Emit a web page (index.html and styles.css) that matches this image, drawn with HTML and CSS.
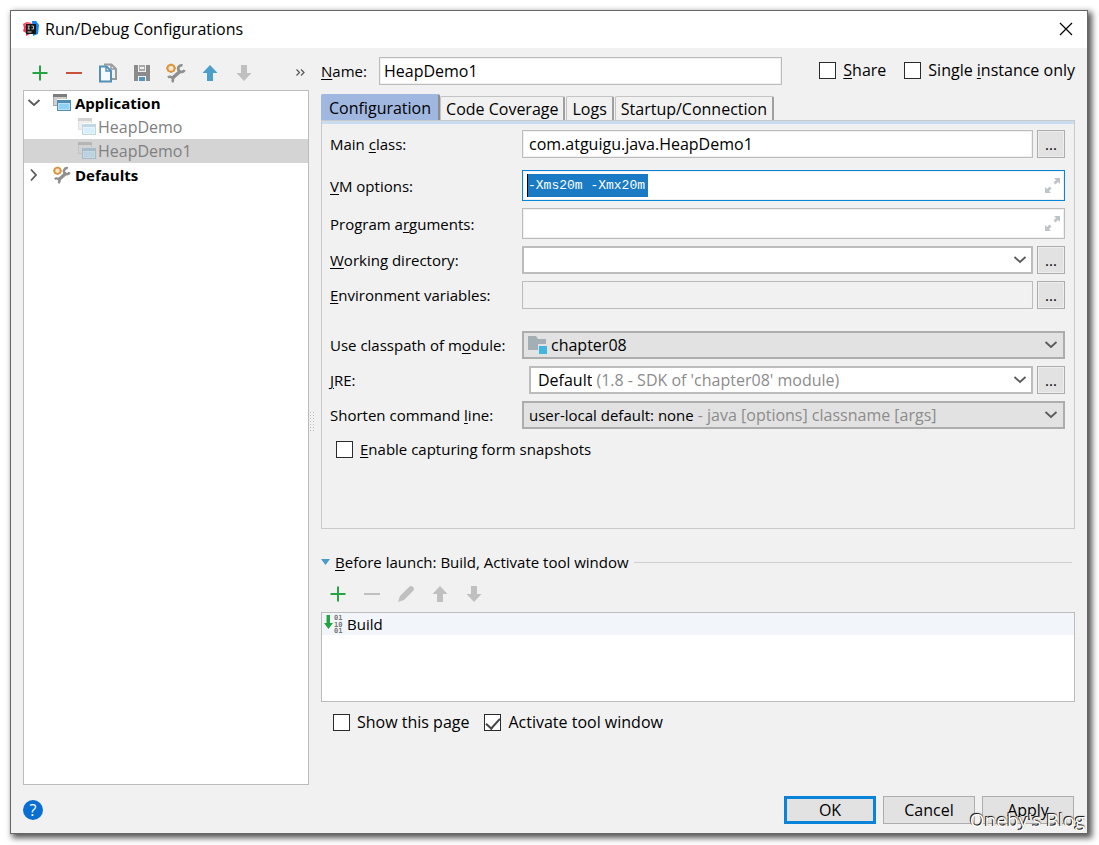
FILE: index.html
```html
<!DOCTYPE html>
<html lang="en">
<head>
<meta charset="utf-8">
<title>Run/Debug Configurations</title>
<link rel="stylesheet" href="styles.css">
</head>
<body>
<svg class="defs" aria-hidden="true">
  <symbol id="chevron" viewBox="0 0 14 8"><path d="M1.5 1 7 6 12.500 1" fill="none" stroke="#5a5a5a" stroke-width="1.800"/></symbol>
  <symbol id="expand" viewBox="0 0 15 15"><path d="M9 0h6v6l-2-2-2.500 2.500-2-2L11 2zM0 9l2 2 2.500-2.500 2 2L4 13l2 2H0z" fill="#bfc4c8"/></symbol>
  <symbol id="plus" viewBox="0 0 16 16"><path d="M8 .5v15M.5 8h15" stroke="#27a343" stroke-width="2"/></symbol>
  <symbol id="minus" viewBox="0 0 16 16"><path d="M0 8h16" stroke="currentColor" stroke-width="2"/></symbol>
  <symbol id="up" viewBox="0 0 16 16"><path d="M8 0 15.500 8H11v8H5V8H.5z" fill="currentColor"/></symbol>
  <symbol id="down" viewBox="0 0 16 16"><path d="M8 16 .5 8H5V0h6v8h4.500z" fill="currentColor"/></symbol>
  <symbol id="app" viewBox="0 0 18 18">
    <path d="M0 0h14v5H4v7H0z" fill="#a9a9a9"/><path d="M0 0h14v3H0z" fill="#7d7d7d"/><path d="M1 3h12v2H4v6H1z" fill="#cfcfcf"/>
    <path d="M4 6h14v11H4z" fill="#4f8fb5"/><path d="M5 9h12v7H5z" fill="#b9e2f8"/><path d="M6 10h10v5H6z" fill="#8fd0f5"/>
  </symbol>
  <symbol id="tools" viewBox="0 0 20 20">
    <path d="M6 15.500 14.500 8" stroke="#8f8f8f" stroke-width="3.600"/>
    <path d="M16.500 2.500a3.300 3.300 0 1 0 2 4.500" fill="none" stroke="#8f8f8f" stroke-width="2.800"/>
    <path d="M2 14.500a2.800 2.800 0 1 1 4 4.500" fill="none" stroke="#8f8f8f" stroke-width="2.600"/>
    <path d="M5 .5 8.500 2 10 5.200 8.500 8.500 5 10 1.500 8.500 0 5.200 1.500 2z" fill="#d9943c"/><circle cx="5" cy="5.200" r="2.500" fill="#f6e6cf"/>
  </symbol>
</svg>

<main class="dialog">
  <header class="titlebar">
    <svg class="logo" viewBox="0 0 16 16" aria-hidden="true">
      <path d="M0 3 4 1l5 2-2 10-4 2 0-3-3-2 1-3z" fill="#f4345b"/><path d="M1 4 5 1l4 1-5 4z" fill="#fb6a6c"/>
      <path d="M9 0h4l3 4-1 9-5 2z" fill="#1285f4"/><path d="M3 3h10v10H3z" fill="#161616"/>
      <path d="M4.500 5h2.500M5.700 5v3M4.500 8h2.500M8.500 5h2v3h-2" fill="none" stroke="#bbb"/><path d="M4.500 11h4" stroke="#ddd"/>
    </svg>
    <h1>Run/Debug Configurations</h1>
    <button class="close" aria-label="Close"><svg viewBox="0 0 12 12"><path d="M0 0 12 12M12 0 0 12" stroke="#000" stroke-width="1.200"/></svg></button>
  </header>

  <div class="content">
    <section class="sidebar">
      <div class="toolbar">
        <button aria-label="Add"><svg class="i16"><use href="#plus"/></svg></button>
        <button class="red" aria-label="Remove"><svg class="i16"><use href="#minus"/></svg></button>
        <button aria-label="Copy"><svg class="i20" viewBox="0 0 20 20"><path d="M6 1.500h7.500L18 6v10h-4" fill="none" stroke="#9a9a9a" stroke-width="2"/><path d="M13 1v5h5" fill="none" stroke="#9a9a9a" stroke-width="1.500"/><path d="M2 3.500h6.500L13 8v10.500H2z" fill="#f4fafd" stroke="#5390b5" stroke-width="2"/><path d="M8 3.500V8h5" fill="none" stroke="#5390b5" stroke-width="1.500"/></svg></button>
        <button aria-label="Save"><svg class="i16" viewBox="0 0 16 16"><path d="M0 0h4v7h8V0h4v16h-4v-5H4v5H0z" fill="#8b8b8b"/><path d="M5 0h6v6H5z" fill="#aaa"/><path d="M6 2h4v2H6z" fill="#f1f1f1"/><path d="M5 12h6v4H5z" fill="#5596bd"/></svg></button>
        <button aria-label="Edit defaults"><svg class="i20"><use href="#tools"/></svg></button>
        <button class="blue" aria-label="Move up"><svg class="i16"><use href="#up"/></svg></button>
        <button class="off" aria-label="Move down" disabled><svg class="i16"><use href="#down"/></svg></button>
        <button class="more" aria-label="More"><svg viewBox="0 0 9 7"><path d="M.5.5 3.500 3.500.5 6.500M5 .5 8 3.500 5 6.500" fill="none" stroke="#555" stroke-width="1.200"/></svg></button>
      </div>
      <ul class="tree" role="tree">
        <li class="node root" role="treeitem" aria-expanded="true"><svg class="arrow"><use href="#chevron"/></svg><svg class="i18"><use href="#app"/></svg>Application</li>
        <li class="node leaf" role="treeitem"><svg class="i18"><use href="#app"/></svg>HeapDemo</li>
        <li class="node leaf selected" role="treeitem" aria-selected="true"><svg class="i18"><use href="#app"/></svg>HeapDemo1</li>
        <li class="node root" role="treeitem" aria-expanded="false"><svg class="arrow closed"><use href="#chevron"/></svg><svg class="i18"><use href="#tools"/></svg>Defaults</li>
      </ul>
    </section>

    <div class="splitter" role="separator"><span class="grip"></span></div>

    <section class="editor">
      <div class="namebar">
        <label for="name"><u>N</u>ame:</label>
        <input class="field" id="name" type="text" value="HeapDemo1">
        <label class="check"><input type="checkbox"><span><u>S</u>hare</span></label>
        <label class="check"><input type="checkbox"><span>Single <u>i</u>nstance only</span></label>
      </div>

      <div class="tabs" role="tablist">
        <button class="tab active" role="tab" aria-selected="true">Configuration</button>
        <button class="tab" role="tab">Code Coverage</button>
        <button class="tab" role="tab">Logs</button>
        <button class="tab" role="tab">Startup/Connection</button>
      </div>
      <form class="panel">
        <div class="row spaced">
          <label for="main">Main <u>c</u>lass:</label>
          <input class="field" id="main" type="text" value="com.atguigu.java.HeapDemo1">
          <button class="dots" type="button" aria-label="Browse main class">...</button>
        </div>
        <div class="row">
          <label for="vm"><u>V</u>M options:</label>
          <div class="field tall focused"><input class="marked" id="vm" type="text" value="-Xms20m -Xmx20m"><button class="inner" type="button" aria-label="Expand"><svg class="i15"><use href="#expand"/></svg></button></div>
        </div>
        <div class="row">
          <label for="args">Program a<u>r</u>guments:</label>
          <div class="field tall"><input class="bare" id="args" type="text"><button class="inner" type="button" aria-label="Expand"><svg class="i15"><use href="#expand"/></svg></button></div>
        </div>
        <div class="row">
          <label for="dir"><u>W</u>orking directory:</label>
          <div class="combo"><input class="bare" id="dir" type="text"><button class="inner" type="button" aria-label="Recent directories"><svg class="arrow"><use href="#chevron"/></svg></button></div>
          <button class="dots" type="button" aria-label="Browse directory">...</button>
        </div>
        <div class="row group-end">
          <label for="env"><u>E</u>nvironment variables:</label>
          <input class="field readonly" id="env" type="text" readonly>
          <button class="dots" type="button" aria-label="Edit variables">...</button>
        </div>
        <div class="row">
          <label for="module">Use classpath of m<u>o</u>dule:</label>
          <div class="combo grey"><svg class="folder" viewBox="0 0 20 18" aria-hidden="true"><path d="M0 0h8l2 3h8v11H0z" fill="#a3aeb5"/><path d="M10 8h10v10H10z" fill="#e2e2e2"/><path d="M11 10h8v8h-8z" fill="#40b6e0"/></svg><select id="module"><option>chapter08</option></select><svg class="arrow"><use href="#chevron"/></svg></div>
        </div>
        <div class="row">
          <label for="jre"><u>J</u>RE:</label>
          <div class="combo inset"><select id="jre"><option>Default</option></select><label class="hint" for="jre">(1.8 - SDK of 'chapter08' module)</label><svg class="arrow"><use href="#chevron"/></svg></div>
          <button class="dots" type="button" aria-label="Browse JRE">...</button>
        </div>
        <div class="row">
          <label for="shorten">Shorten command <u>l</u>ine:</label>
          <div class="combo grey"><select class="compact" id="shorten"><option>user-local default: none</option></select><label class="hint" for="shorten">- java [options] classname [args]</label><svg class="arrow"><use href="#chevron"/></svg></div>
        </div>
        <label class="check snapshots"><input type="checkbox"><span><u>E</u>nable capturing form snapshots</span></label>
      </form>

      <section class="launch">
        <h2><svg class="fold" viewBox="0 0 9 6" aria-hidden="true"><path d="M0 0h9L4.500 6z" fill="#4a9bc7"/></svg><span><u>B</u>efore launch: Build, Activate tool window</span></h2>
        <div class="toolbar off">
          <button aria-label="Add task"><svg class="i16"><use href="#plus"/></svg></button>
          <button aria-label="Remove task" disabled><svg class="i16"><use href="#minus"/></svg></button>
          <button aria-label="Edit task" disabled><svg class="i16" viewBox="0 0 16 16"><path d="M0 16 2 10 11 1q2-2 4 0t0 4L6 14z" fill="currentColor"/></svg></button>
          <button aria-label="Move task up" disabled><svg class="i16"><use href="#up"/></svg></button>
          <button aria-label="Move task down" disabled><svg class="i16"><use href="#down"/></svg></button>
        </div>
        <ul class="tasks">
          <li><svg class="build" viewBox="0 0 18 18" aria-hidden="true"><path d="M2.500 0h3.500v8h3L4.500 14 0 8h2.500z" fill="#27a343"/><g font-family="DejaVu Sans Mono" font-size="7" font-weight="bold" fill="#777"><text x="10" y="5">01</text><text x="10" y="12">10</text><text x="10" y="18">01</text></g></svg>Build</li>
        </ul>
        <div class="options">
          <label class="check"><input type="checkbox"><span>Show this page</span></label>
          <label class="check"><input type="checkbox" checked><span>Activate tool window</span></label>
        </div>
      </section>
    </section>
  </div>

  <footer class="footer">
    <button class="help" aria-label="Help">?</button>
    <button class="action primary">OK</button>
    <button class="action">Cancel</button>
    <button class="action">Apply</button>
  </footer>
  <span class="watermark">Oneby's Blog</span>
</main>
</body>
</html>
```
FILE: styles.css
```css
* { box-sizing: border-box; }

body {
  margin: 0;
  min-height: 100vh;
  padding: 10px 11px 11px 10px;
  display: flex;
  background: #fff;
  color: #000;
  font: 15px/20px "Open Sans", "Noto Sans", sans-serif;
}

button, input, select { font: inherit; color: inherit; margin: 0; padding: 0; border: 0; background: none; min-width: 0; outline: 0; }
select { appearance: none; field-sizing: content; }
button { display: flex; align-items: center; justify-content: center; }
ul { list-style: none; margin: 0; padding: 0; }
h1, h2 { margin: 0; font-size: inherit; font-weight: 400; }
u { text-underline-offset: 2px; }
svg { display: block; flex: none; }

.defs { position: absolute; width: 0; height: 0; }
.i15 { width: 15px; height: 15px; }
.i16 { width: 16px; height: 16px; }
.i18 { width: 18px; height: 18px; }
.i20 { width: 20px; height: 20px; }
.arrow { width: 14px; height: 8px; }
.arrow.closed { transform: rotate(-90deg); }

.dialog {
  position: relative;
  flex: 1;
  min-width: 0;
  display: flex;
  flex-direction: column;
  background: #f1f1f1;
  border: 1px solid #666;
  box-shadow: 3px 3px 6px 1px #555;
}

.titlebar { display: flex; align-items: center; height: 37px; padding: 0 15px 2px 12px; background: #fff; }
.logo { width: 16px; height: 16px; margin-right: 6px; }
.titlebar h1 { flex: 1; font-size: 16px; }
.close svg { width: 12px; height: 12px; overflow: visible; }

.content { flex: 1; display: flex; padding: 9px 12px 0; }

.sidebar { width: 286px; display: flex; flex-direction: column; }
.toolbar { display: flex; align-items: center; gap: 10px; height: 33px; padding: 0 4px 2px 5px; }
.toolbar button { width: 24px; height: 24px; }
.toolbar .more { width: 9px; margin-left: auto; }
.more svg { width: 9px; height: 7px; }
.toolbar .red { color: #c9503f; }
.toolbar .blue { color: #4b9fca; }
.off { color: #c0c0c0; }

.tree { flex: 1; background: #fff; border: 1px solid #bcbcbc; }
.node { display: flex; align-items: center; height: 24px; gap: 4px; }
.root { padding-left: 3px; font-weight: 700; }
.root .arrow { margin-right: 8px; }
.leaf { padding-left: 54px; gap: 2px; color: #808080; font-size: 16px; }
.leaf svg { opacity: .35; }
.selected { background: #d4d4d4; }

.splitter { width: 12px; display: flex; align-items: center; }
.grip { width: 6px; height: 20px; background: radial-gradient(circle, #bbb 1px, transparent 1px) 0 0 / 3px 3px; }

.editor { flex: 1; min-width: 0; display: flex; flex-direction: column; padding-bottom: 53px; }

.namebar { display: flex; align-items: center; height: 28px; margin-bottom: 9px; }
.namebar > label:first-child { width: 58px; }
.namebar .field { flex: 1; height: 28px; margin-right: 37px; padding: 0 4px; }
.namebar .check { padding-bottom: 2px; }
.namebar .check + .check { margin-left: 18px; }

.field { height: 28px; padding: 0 6px; background: #fff; border: 1px solid #bcbcbc; box-shadow: inset 0 0 0 1px #f0f0f0; font-size: 16px; }
.field.tall { display: flex; align-items: center; height: 31px; padding: 0 4px; }
.field.focused { border-color: #0a84d8; }
.field.readonly { background: #f1f1f1; }
.bare { flex: 1; }
.marked { height: 23px; width: 121px; margin-right: auto; background: #1a7bc4; color: #fff; border-left: 1px solid #000; font: 13px "Liberation Mono", monospace; }

.check { display: flex; align-items: center; gap: 7px; font-size: 16px; }
.check input { appearance: none; flex: none; display: grid; place-items: center; width: 17px; height: 17px; border: 1px solid #2b2b2b; background: #fff; }
.check input:checked::after { content: ""; width: 6px; height: 12px; margin-bottom: 4px; border: solid #444; border-width: 0 2px 2px 0; transform: rotate(42deg); }

.tabs { display: flex; align-items: flex-end; height: 26px; font-size: 16px; }
.tab { height: 24px; padding: 0 5px; border: 1px solid #c4c4c4; border-right: 2px solid #a0a0a0; border-bottom: 0; border-radius: 2px 2px 0 0; }
.tab + .tab { margin-left: 1px; }
.tab.active { height: 26px; padding: 0 7px; margin-right: -1px; background: #a0b7e0; border-color: #a0b7e0; border-right-color: #8c8c8c; }

.panel { flex: 1; padding: 5px 9px 9px 8px; border: 1px solid #c9c9c9; box-shadow: inset 0 3px #c8dcf2; padding-top: 9px; }
.row { display: flex; align-items: center; gap: 4px; margin-bottom: 7px; }
.row > label { flex: none; width: 188px; }
.row > .field, .row > .combo { flex: 1; min-width: 0; }
.row.spaced { margin-bottom: 12px; }
.row.group-end { margin-bottom: 22px; }

.combo { display: flex; align-items: center; height: 28px; padding: 0 4px; border: 2px solid #bcbcbc; background: #fff; font-size: 16px; }
.combo.grey { background: #e2e2e2; border-color: #adadad; padding-right: 5px; }
.combo.inset { margin-left: 7px; padding-left: 7px; }
.combo > .arrow { margin-left: auto; }
.compact { margin-left: 1px; font-size: 15px; }
.hint { margin-left: 4px; color: #8c8c8c; white-space: nowrap; }
.folder { width: 20px; height: 18px; margin-right: 3px; }
.dots { width: 28px; height: 28px; border: 1px solid #adadad; background: #e2e2e2; box-shadow: inset 0 0 0 1px #ededed; }
.snapshots { width: max-content; margin: 10px 0 0 6px; font-size: 15px; }

.launch { padding-top: 23px; }
.launch h2 { display: flex; align-items: center; gap: 5px; padding-right: 3px; }
.launch h2::after { content: ""; flex: 1; height: 1px; background: #cfcfcf; }
.fold { width: 9px; height: 6px; }
.launch .toolbar { height: 40px; padding: 4px 0 0 5px; }
.tasks { height: 90px; background: #fff; border: 1px solid #bcbcbc; }
.tasks li { display: flex; align-items: center; gap: 5px; height: 22px; padding-left: 2px; background: #f2f5fa; }
.build { width: 18px; height: 18px; overflow: visible; }
.options { display: flex; gap: 15px; padding: 10px 0 0 12px; }

.footer { display: flex; align-items: center; gap: 7px; padding: 11px 13px 9px 12px; font-size: 16px; }
.help { width: 20px; height: 20px; margin-right: auto; border-radius: 50%; background: #0a6fd0; color: #fff; }
.action { width: 92px; height: 28px; padding-bottom: 1px; border: 1px solid #adadad; background: #e2e2e2; }
.action.primary { border: 3px solid #0a84d8; }

.watermark { position: absolute; right: 2px; bottom: 1px; color: #fff; font-size: 19px; line-height: 24px; text-shadow: -1px -1px 0 #222, 0 -1px 1px #444; pointer-events: none; }
```
